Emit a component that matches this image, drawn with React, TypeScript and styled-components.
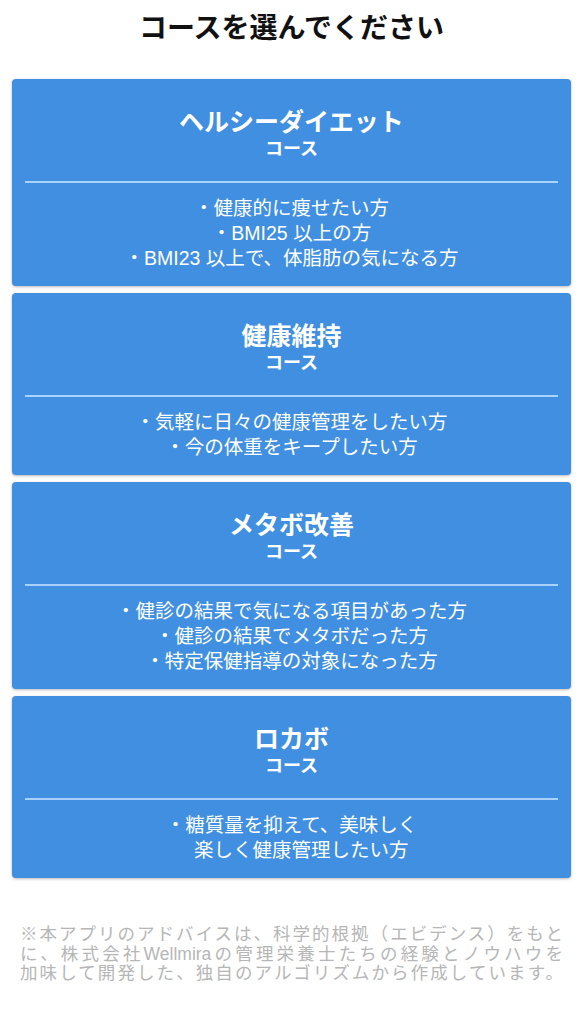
import React from 'react';
import { createGlobalStyle, styled } from 'styled-components';

const GlobalStyle = createGlobalStyle`
  html, body {
    margin: 0;
    padding: 0;
    background: #ffffff;
  }

  body {
    font-family: 'Liberation Sans', 'Noto Sans CJK JP', sans-serif;
    -webkit-font-smoothing: antialiased;
  }
`;

const Page = styled.div`
  width: 583px;
  min-height: 1024px;
  display: flex;
  flex-direction: column;
  box-sizing: border-box;
  padding: 12px 0 40px;
`;

const Heading = styled.h1`
  margin: 0 0 33px;
  font-size: 28px;
  line-height: 34px;
  font-weight: 700;
  color: #111111;
  text-align: center;
`;

const CourseList = styled.div`
  display: flex;
  flex-direction: column;
  gap: 7px;
  padding: 0 12px;
`;

const CourseCard = styled.button`
  display: flex;
  flex-direction: column;
  align-items: stretch;
  width: 100%;
  margin: 0;
  padding: 28px 13px 15px;
  border: none;
  border-radius: 4px;
  background: #418fe0;
  box-shadow: 0 1px 3px rgba(0, 0, 0, 0.28);
  color: #ffffff;
  font-family: inherit;
  text-align: center;
  cursor: pointer;
`;

const CourseName = styled.div`
  font-size: 25px;
  line-height: 30px;
  font-weight: 700;
`;

const CourseSuffix = styled.div`
  font-size: 18px;
  line-height: 24px;
  font-weight: 700;
`;

const Divider = styled.hr`
  margin: 20px 0 13px;
  height: 2px;
  border: none;
  background: #a9d3fb;
`;

const TargetList = styled.ul`
  margin: 0;
  padding: 0;
  list-style: none;
`;

const TargetItem = styled.li`
  font-size: 19.5px;
  line-height: 25px;
  font-weight: 400;
  white-space: pre;
`;

const Notice = styled.p`
  margin: 47px 20px 0;
  color: #b6b6b6;
  font-size: 17.5px;
  line-height: 19.6px;
  font-weight: 400;
  text-align: justify;
  text-align-last: justify;
  white-space: nowrap;
`;

type Course = {
  name: string;
  targets: string[];
};

const courses: Course[] = [
  {
    name: 'ヘルシーダイエット',
    targets: ['・健康的に痩せたい方', '・BMI25 以上の方', '・BMI23 以上で、体脂肪の気になる方'],
  },
  {
    name: '健康維持',
    targets: ['・気軽に日々の健康管理をしたい方', '・今の体重をキープしたい方'],
  },
  {
    name: 'メタボ改善',
    targets: ['・健診の結果で気になる項目があった方', '・健診の結果でメタボだった方', '・特定保健指導の対象になった方'],
  },
  {
    name: 'ロカボ',
    targets: ['・糖質量を抑えて、美味しく', '　楽しく健康管理したい方'],
  },
];

export default function App() {
  return (
    <>
      <GlobalStyle />
      <Page>
        <Heading>コースを選んでください</Heading>

        <CourseList>
          {courses.map((course) => (
            <CourseCard key={course.name} type='button'>
              <CourseName>{course.name}</CourseName>
              <CourseSuffix>コース</CourseSuffix>
              <Divider />
              <TargetList>
                {course.targets.map((target) => (
                  <TargetItem key={target}>{target}</TargetItem>
                ))}
              </TargetList>
            </CourseCard>
          ))}
        </CourseList>

        <Notice>
          ※本アプリのアドバイスは、科学的根拠（エビデンス）をもと
          <br />
          に、株式会社Wellmiraの管理栄養士たちの経験とノウハウを
          <br />
          加味して開発した、独自のアルゴリズムから作成しています。
        </Notice>
      </Page>
    </>
  );
}
